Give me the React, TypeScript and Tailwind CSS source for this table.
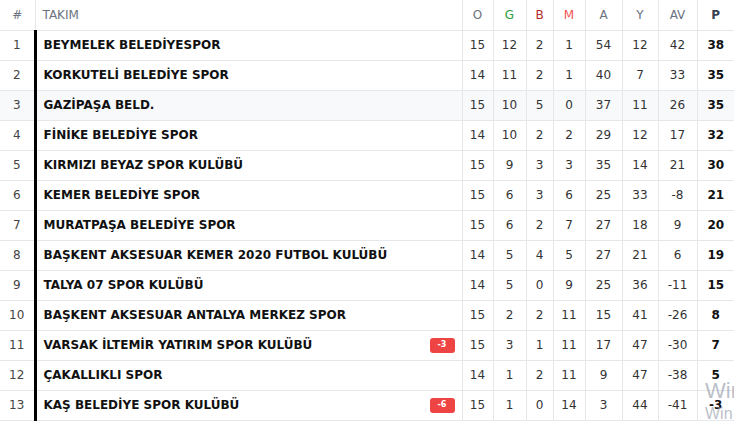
import React from "react";

type Row = {
  pos: number;
  team: string;
  o: number;
  g: number;
  b: number;
  m: number;
  a: number;
  y: number;
  av: number;
  p: number;
  penalty?: number;
};

const rows: Row[] = [
  { pos: 1, team: "BEYMELEK BELEDİYESPOR", o: 15, g: 12, b: 2, m: 1, a: 54, y: 12, av: 42, p: 38 },
  { pos: 2, team: "KORKUTELİ BELEDİYE SPOR", o: 14, g: 11, b: 2, m: 1, a: 40, y: 7, av: 33, p: 35 },
  { pos: 3, team: "GAZİPAŞA BELD.", o: 15, g: 10, b: 5, m: 0, a: 37, y: 11, av: 26, p: 35 },
  { pos: 4, team: "FİNİKE BELEDİYE SPOR", o: 14, g: 10, b: 2, m: 2, a: 29, y: 12, av: 17, p: 32 },
  { pos: 5, team: "KIRMIZI BEYAZ SPOR KULÜBÜ", o: 15, g: 9, b: 3, m: 3, a: 35, y: 14, av: 21, p: 30 },
  { pos: 6, team: "KEMER BELEDİYE SPOR", o: 15, g: 6, b: 3, m: 6, a: 25, y: 33, av: -8, p: 21 },
  { pos: 7, team: "MURATPAŞA BELEDİYE SPOR", o: 15, g: 6, b: 2, m: 7, a: 27, y: 18, av: 9, p: 20 },
  { pos: 8, team: "BAŞKENT AKSESUAR KEMER 2020 FUTBOL KULÜBÜ", o: 14, g: 5, b: 4, m: 5, a: 27, y: 21, av: 6, p: 19 },
  { pos: 9, team: "TALYA 07 SPOR KULÜBÜ", o: 14, g: 5, b: 0, m: 9, a: 25, y: 36, av: -11, p: 15 },
  { pos: 10, team: "BAŞKENT AKSESUAR ANTALYA MERKEZ SPOR", o: 15, g: 2, b: 2, m: 11, a: 15, y: 41, av: -26, p: 8 },
  { pos: 11, team: "VARSAK İLTEMİR YATIRIM SPOR KULÜBÜ", o: 15, g: 3, b: 1, m: 11, a: 17, y: 47, av: -30, p: 7, penalty: -3 },
  { pos: 12, team: "ÇAKALLIKLI SPOR", o: 14, g: 1, b: 2, m: 11, a: 9, y: 47, av: -38, p: 5 },
  { pos: 13, team: "KAŞ BELEDİYE SPOR KULÜBÜ", o: 15, g: 1, b: 0, m: 14, a: 3, y: 44, av: -41, p: -3, penalty: -6 },
];

const font = { fontFamily: "'DejaVu Sans', 'Open Sans', sans-serif" };

export default function App() {
  return (
    <div className="relative w-[734px] h-[425px] overflow-hidden bg-white text-[12px]" style={font}>
      <table className="w-[734px] border-collapse table-fixed">
        <colgroup>
          <col className="w-[35px]" />
          <col className="w-[427px]" />
          <col className="w-[31px]" />
          <col className="w-[33px]" />
          <col className="w-[27px]" />
          <col className="w-[32px]" />
          <col className="w-[37px]" />
          <col className="w-[36px]" />
          <col className="w-[39px]" />
          <col className="w-[37px]" />
        </colgroup>
        <thead>
          <tr className="h-[30px] text-[12px] text-[#6b7280]">
            <th className="border border-[#e5e7eb] border-l-0 border-t-0 font-normal text-center">#</th>
            <th className="border border-[#e5e7eb] border-t-0 font-normal text-left pl-[7px]">TAKIM</th>
            <th className="border border-[#e5e7eb] border-t-0 font-normal">O</th>
            <th className="border border-[#e5e7eb] border-t-0 font-normal text-[#2e9e3e]">G</th>
            <th className="border border-[#e5e7eb] border-t-0 font-normal text-[#b32a2a]">B</th>
            <th className="border border-[#e5e7eb] border-t-0 font-normal text-[#f25555]">M</th>
            <th className="border border-[#e5e7eb] border-t-0 font-normal">A</th>
            <th className="border border-[#e5e7eb] border-t-0 font-normal">Y</th>
            <th className="border border-[#e5e7eb] border-t-0 font-normal">AV</th>
            <th className="border border-[#e5e7eb] border-t-0 border-r-0 font-bold text-[#374151]">P</th>
          </tr>
        </thead>
        <tbody>
          {rows.map((r) => (
            <tr key={r.pos} className={`h-[30px] text-[#333] ${r.pos === 3 ? "bg-[#f8f9fb]" : ""}`}>
              <td className="border border-[#e5e7eb] border-l-0 text-center text-[#444]">{r.pos}</td>
              <td className="border border-[#e5e7eb] border-l-[3px] border-l-black pl-[7px] pr-[7px]">
                <div className="flex items-center justify-between">
                  <span className="font-bold text-[#111]">{r.team}</span>
                  {r.penalty !== undefined && (
                    <span className="rounded-[3px] bg-[#ef4444] text-white text-[8px] font-bold w-[25px] h-[15px] flex items-center justify-center">
                      {r.penalty}
                    </span>
                  )}
                </div>
              </td>
              <td className="border border-[#e5e7eb] text-center">{r.o}</td>
              <td className="border border-[#e5e7eb] text-center">{r.g}</td>
              <td className="border border-[#e5e7eb] text-center">{r.b}</td>
              <td className="border border-[#e5e7eb] text-center">{r.m}</td>
              <td className="border border-[#e5e7eb] text-center">{r.a}</td>
              <td className="border border-[#e5e7eb] text-center">{r.y}</td>
              <td className="border border-[#e5e7eb] text-center">{r.av}</td>
              <td className="border border-[#e5e7eb] border-r-0 text-center font-bold text-[#111]">{r.p}</td>
            </tr>
          ))}
        </tbody>
      </table>
      <div className="absolute left-[705px] top-[380px] text-[22px] leading-none text-[#9ca3af]/70 pointer-events-none" style={{ fontFamily: "'Liberation Sans', sans-serif" }}>
        Win
      </div>
      <div className="absolute left-[705px] top-[406px] text-[16px] leading-none text-[#9ca3af]/70 pointer-events-none" style={{ fontFamily: "'Liberation Sans', sans-serif" }}>
        Win
      </div>
    </div>
  );
}
